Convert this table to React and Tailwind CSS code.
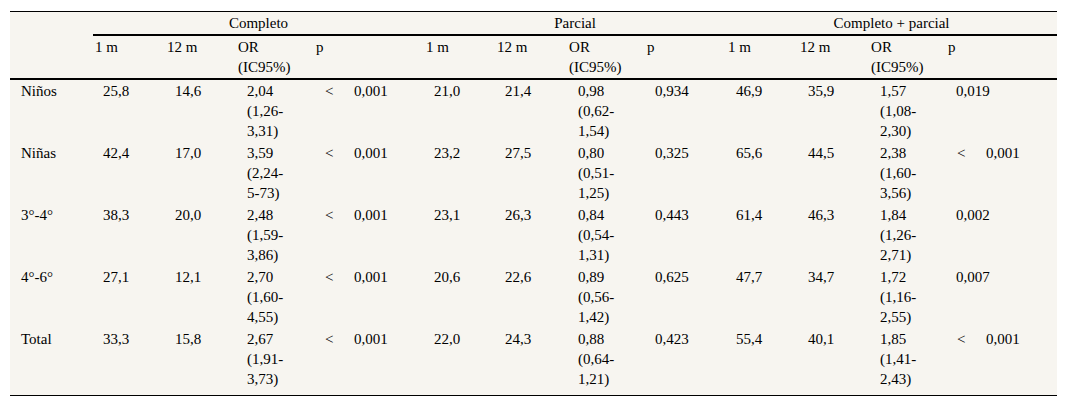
import React from "react"

const rows = [
  ["Niños", "25,8", "14,6", ["2,04", "(1,26-", "3,31)"], "<0,001", "21,0", "21,4", ["0,98", "(0,62-", "1,54)"], "0,934", "46,9", "35,9", ["1,57", "(1,08-", "2,30)"], "0,019"],
  ["Niñas", "42,4", "17,0", ["3,59", "(2,24-", "5-73)"], "<0,001", "23,2", "27,5", ["0,80", "(0,51-", "1,25)"], "0,325", "65,6", "44,5", ["2,38", "(1,60-", "3,56)"], "<0,001"],
  ["3°-4°", "38,3", "20,0", ["2,48", "(1,59-", "3,86)"], "<0,001", "23,1", "26,3", ["0,84", "(0,54-", "1,31)"], "0,443", "61,4", "46,3", ["1,84", "(1,26-", "2,71)"], "0,002"],
  ["4°-6°", "27,1", "12,1", ["2,70", "(1,60-", "4,55)"], "<0,001", "20,6", "22,6", ["0,89", "(0,56-", "1,42)"], "0,625", "47,7", "34,7", ["1,72", "(1,16-", "2,55)"], "0,007"],
  ["Total", "33,3", "15,8", ["2,67", "(1,91-", "3,73)"], "<0,001", "22,0", "24,3", ["0,88", "(0,64-", "1,21)"], "0,423", "55,4", "40,1", ["1,85", "(1,41-", "2,43)"], "<0,001"],
]

const widths = [83, 72, 71, 78, 110, 71, 72, 78, 81, 72, 71, 77, 111]

function Cell({ value }) {
  if (Array.isArray(value)) {
    return (
      <td className="align-top py-[1px] pl-[11px]">
        {value.map((v) => (
          <div key={v}>{v}</div>
        ))}
      </td>
    )
  }
  if (value.startsWith("<")) {
    return (
      <td className="align-top py-[1px] pl-[11px] whitespace-nowrap">
        <span className="inline-block w-[29px]">&lt;</span>
        {value.slice(1)}
      </td>
    )
  }
  return <td className="align-top py-[1px] pl-[10px]">{value}</td>
}

export default function App() {
  return (
    <div className="bg-white pt-[11px] pl-[10px] w-[1068px] h-[407px] [font-family:'Liberation_Serif',serif] text-[15px] leading-[20px] text-black">
      <div className="w-[1047px] bg-[#f7f5f0] border-t border-b border-black pb-[5px]">
        <table className="table-fixed border-collapse w-[1047px]">
          <colgroup>
            {widths.map((w, i) => (
              <col key={i} style={{ width: w }} />
            ))}
          </colgroup>
          <thead>
            <tr>
              <th rowSpan={2} className="border-b-2 border-black"></th>
              <th colSpan={4} className="font-normal text-center py-[1px] border-b-2 border-black">Completo</th>
              <th colSpan={4} className="font-normal text-center py-[1px] border-b-2 border-black">Parcial</th>
              <th colSpan={4} className="font-normal text-center py-[1px] border-b-2 border-black">Completo + parcial</th>
            </tr>
            <tr className="border-b-2 border-black">
              {[0, 1, 2].map((g) => (
                <React.Fragment key={g}>
                  <th className="font-normal text-left align-top py-[1px] pl-[2px]">1 m</th>
                  <th className="font-normal text-left align-top py-[1px] pl-[2px]">12 m</th>
                  <th className="font-normal text-left align-top py-[1px] pl-[2px]">
                    <div>OR</div>
                    <div>(IC95%)</div>
                  </th>
                  <th className="font-normal text-left align-top py-[1px] pl-[2px]">p</th>
                </React.Fragment>
              ))}
            </tr>
          </thead>
          <tbody>
            {rows.map((r) => (
              <tr key={r[0]}>
                <td className="align-top py-[1px] pl-[11px]">{r[0]}</td>
                {r.slice(1).map((v, i) => (
                  <Cell key={i} value={v} />
                ))}
              </tr>
            ))}
          </tbody>
        </table>
      </div>
    </div>
  )
}
